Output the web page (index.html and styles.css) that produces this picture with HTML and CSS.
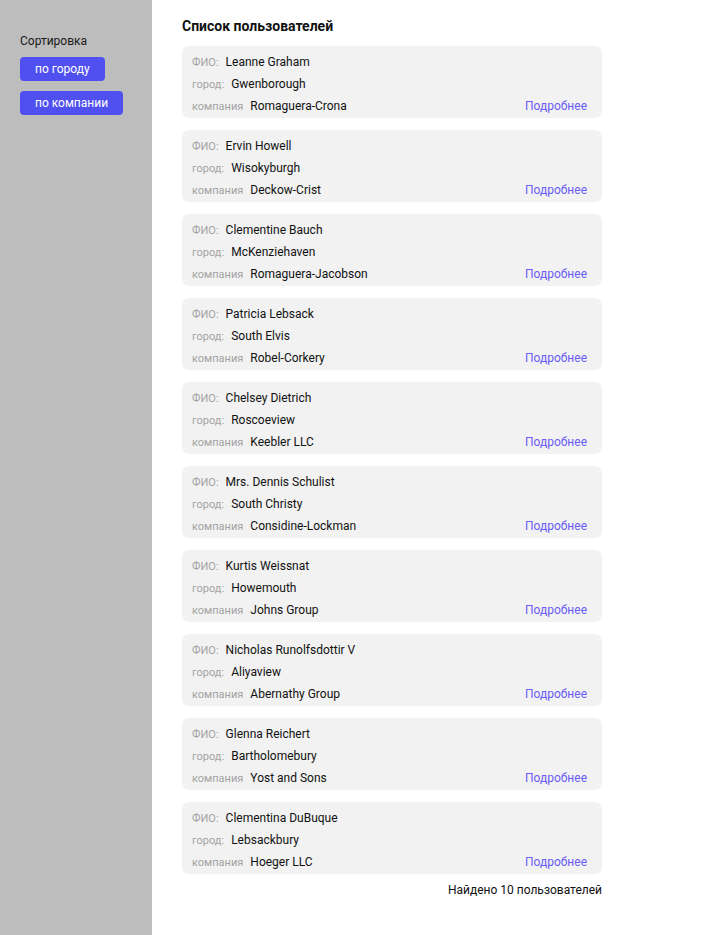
FILE: index.html
```html
<!DOCTYPE html>
<html lang="ru">
<head>
<meta charset="utf-8">
<title>Список пользователей</title>
<link rel="stylesheet" href="styles.css">
</head>
<body>
<div class="layout">
  <aside class="sidebar">
    <div class="sort-title">Сортировка</div>
    <button class="btn">по городу</button>
    <button class="btn">по компании</button>
  </aside>
  <main class="main">
    <h1 class="title">Список пользователей</h1>
    <div class="list">
      <div class="card">
        <div class="row"><span class="label">ФИО:</span><span class="value">Leanne Graham</span></div>
        <div class="row"><span class="label">город:</span><span class="value">Gwenborough</span></div>
        <div class="row"><span class="label">компания</span><span class="value">Romaguera-Crona</span><a class="more" href="#">Подробнее</a></div>
      </div>
      <div class="card">
        <div class="row"><span class="label">ФИО:</span><span class="value">Ervin Howell</span></div>
        <div class="row"><span class="label">город:</span><span class="value">Wisokyburgh</span></div>
        <div class="row"><span class="label">компания</span><span class="value">Deckow-Crist</span><a class="more" href="#">Подробнее</a></div>
      </div>
      <div class="card">
        <div class="row"><span class="label">ФИО:</span><span class="value">Clementine Bauch</span></div>
        <div class="row"><span class="label">город:</span><span class="value">McKenziehaven</span></div>
        <div class="row"><span class="label">компания</span><span class="value">Romaguera-Jacobson</span><a class="more" href="#">Подробнее</a></div>
      </div>
      <div class="card">
        <div class="row"><span class="label">ФИО:</span><span class="value">Patricia Lebsack</span></div>
        <div class="row"><span class="label">город:</span><span class="value">South Elvis</span></div>
        <div class="row"><span class="label">компания</span><span class="value">Robel-Corkery</span><a class="more" href="#">Подробнее</a></div>
      </div>
      <div class="card">
        <div class="row"><span class="label">ФИО:</span><span class="value">Chelsey Dietrich</span></div>
        <div class="row"><span class="label">город:</span><span class="value">Roscoeview</span></div>
        <div class="row"><span class="label">компания</span><span class="value">Keebler LLC</span><a class="more" href="#">Подробнее</a></div>
      </div>
      <div class="card">
        <div class="row"><span class="label">ФИО:</span><span class="value">Mrs. Dennis Schulist</span></div>
        <div class="row"><span class="label">город:</span><span class="value">South Christy</span></div>
        <div class="row"><span class="label">компания</span><span class="value">Considine-Lockman</span><a class="more" href="#">Подробнее</a></div>
      </div>
      <div class="card">
        <div class="row"><span class="label">ФИО:</span><span class="value">Kurtis Weissnat</span></div>
        <div class="row"><span class="label">город:</span><span class="value">Howemouth</span></div>
        <div class="row"><span class="label">компания</span><span class="value">Johns Group</span><a class="more" href="#">Подробнее</a></div>
      </div>
      <div class="card">
        <div class="row"><span class="label">ФИО:</span><span class="value">Nicholas Runolfsdottir V</span></div>
        <div class="row"><span class="label">город:</span><span class="value">Aliyaview</span></div>
        <div class="row"><span class="label">компания</span><span class="value">Abernathy Group</span><a class="more" href="#">Подробнее</a></div>
      </div>
      <div class="card">
        <div class="row"><span class="label">ФИО:</span><span class="value">Glenna Reichert</span></div>
        <div class="row"><span class="label">город:</span><span class="value">Bartholomebury</span></div>
        <div class="row"><span class="label">компания</span><span class="value">Yost and Sons</span><a class="more" href="#">Подробнее</a></div>
      </div>
      <div class="card">
        <div class="row"><span class="label">ФИО:</span><span class="value">Clementina DuBuque</span></div>
        <div class="row"><span class="label">город:</span><span class="value">Lebsackbury</span></div>
        <div class="row"><span class="label">компания</span><span class="value">Hoeger LLC</span><a class="more" href="#">Подробнее</a></div>
      </div>
    </div>
    <div class="found">Найдено 10 пользователей</div>
  </main>
</div>
</body>
</html>
```
FILE: styles.css
```css
* { box-sizing: border-box; }
html, body { margin: 0; padding: 0; }
body {
  font-family: Roboto, "Liberation Sans", Arial, sans-serif;
  color: #111;
  background: #fff;
}
.layout {
  display: flex;
  min-height: 935px;
}
.sidebar {
  width: 152px;
  flex-shrink: 0;
  background: #bdbdbd;
  padding: 34px 20px 0;
  display: flex;
  flex-direction: column;
  align-items: flex-start;
}
.sort-title {
  font-size: 12px;
  line-height: 14px;
  color: #1a1a1a;
  margin-bottom: 9px;
}
.btn {
  font-family: inherit;
  font-size: 12px;
  height: 24px;
  padding: 0 15px;
  border: none;
  border-radius: 4px;
  background: #5050f0;
  color: #fff;
  margin-bottom: 10px;
  cursor: pointer;
}
.main {
  padding: 17px 30px 40px;
  width: 450px;
}
.title {
  margin: 0 0 11px;
  font-size: 14px;
  font-weight: 700;
  line-height: 18px;
  color: #111;
}
.list {
  display: flex;
  flex-direction: column;
  gap: 12px;
}
.card {
  background: #f2f2f2;
  border-radius: 7px;
  padding: 5px 15px 1px 10px;
  width: 420px;
}
.row {
  display: flex;
  align-items: baseline;
  height: 22px;
  line-height: 22px;
}
.label {
  font-size: 11px;
  color: #a3a3a3;
  margin-right: 7px;
}
.value {
  font-size: 12px;
  color: #111;
}
.more {
  margin-left: auto;
  font-size: 12px;
  color: #6a5cf6;
  text-decoration: none;
}
.found {
  margin-top: 8px;
  text-align: right;
  font-size: 12px;
  line-height: 16px;
  color: #111;
  width: 420px;
}
```
